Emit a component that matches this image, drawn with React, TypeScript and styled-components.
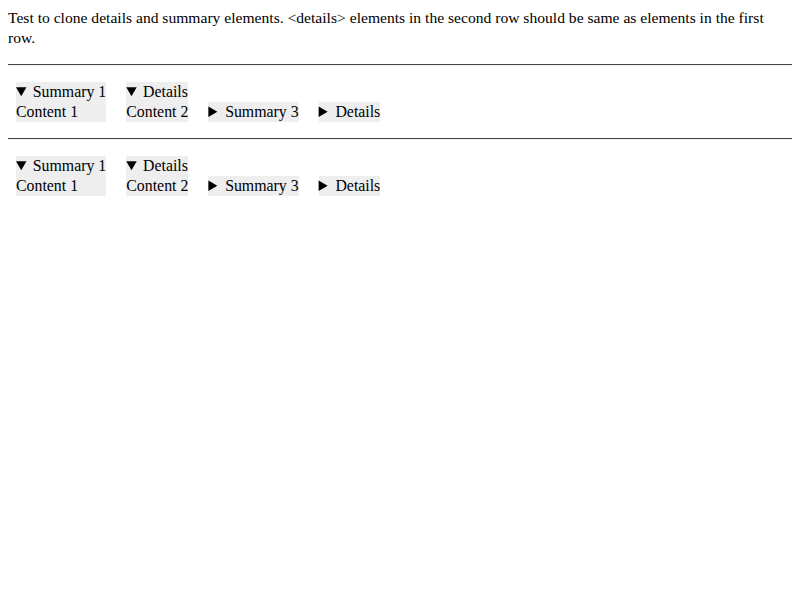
import React from "react";
import styled, { createGlobalStyle } from "styled-components";

const GlobalStyle = createGlobalStyle`
  body {
    margin: 8px;
    font-family: "Liberation Serif", "Times New Roman", serif;
    font-size: 15.6px;
    line-height: 20px;
    color: #000;
    background: #fff;
  }
`;

const Intro = styled.p`
  margin: 0 0 16px;
`;

const Rule = styled.hr`
  margin: 8px 0;
  border: 1px inset #eee;
  border-top-color: #9a9a9a;
  border-left: none;
  border-right: none;
  border-bottom-color: #eee;
`;

const Row = styled.div`
  display: flex;
  align-items: flex-end;
  gap: 4px;
  font-size: 15.85px;
`;

const Disclosure = styled.details`
  display: block;
  margin: 8px;
  background: #eee;
`;

const Summary = styled.summary`
  cursor: default;
`;

type Item = { summary?: string; content: string; open: boolean };

const items: Item[] = [
  { summary: "Summary 1", content: "Content 1", open: true },
  { content: "Content 2", open: true },
  { summary: "Summary 3", content: "Content 3", open: false },
  { content: "Content 4", open: false },
];

const DetailsRow = () => (
  <Row>
    {items.map((it, i) => (
      <Disclosure key={i} open={it.open}>
        {it.summary ? <Summary>{it.summary}</Summary> : null}
        {it.content}
      </Disclosure>
    ))}
  </Row>
);

export default function App() {
  return (
    <>
      <GlobalStyle />
      <Intro>
        Test to clone details and summary elements. &lt;details&gt; elements in
        the second row should be same as elements in the first row.
      </Intro>
      <Rule />
      <DetailsRow />
      <Rule />
      <DetailsRow />
    </>
  );
}
